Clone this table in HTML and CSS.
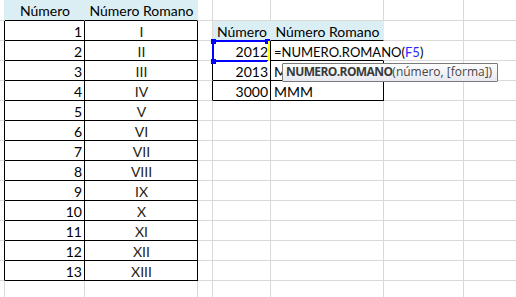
FILE: index.html
```html
<!DOCTYPE html>
<html lang="es">
<head>
<meta charset="utf-8">
<title>NUMERO.ROMANO</title>
<link rel="stylesheet" href="styles.css">
</head>
<body>
<div class="sheet">
  <!-- row 1 -->
  <div class="c a hdl"></div><div class="c hd">Número</div><div class="c hd">Número Romano</div><div class="c"></div><div class="c"></div><div class="c"></div><div class="c"></div><div class="c"></div>
  <!-- row 2 -->
  <div class="c a lb"></div><div class="c bx num">1</div><div class="c bx rom">I</div><div class="c"></div><div class="c hd">Número</div><div class="c hd">Número Romano</div><div class="c"></div><div class="c"></div>
  <!-- row 3 -->
  <div class="c a lb"></div><div class="c bx num">2</div><div class="c bx rom">II</div><div class="c lb"></div><div class="c bx num">2012</div><div class="c bx edit"><span class="editor">=NUMERO.ROMANO(<span class="ref">F5</span>)</span></div><div class="c"></div><div class="c"></div>
  <!-- row 4 -->
  <div class="c a lb"></div><div class="c bx num">3</div><div class="c bx rom">III</div><div class="c lb"></div><div class="c bx num">2013</div><div class="c bx">MMXIII</div><div class="c"></div><div class="c"></div>
  <!-- row 5 -->
  <div class="c a lb"></div><div class="c bx num">4</div><div class="c bx rom">IV</div><div class="c lb"></div><div class="c bx num">3000</div><div class="c bx">MMM</div><div class="c"></div><div class="c"></div>
  <!-- row 6 -->
  <div class="c a lb"></div><div class="c bx num">5</div><div class="c bx rom">V</div><div class="c"></div><div class="c"></div><div class="c"></div><div class="c"></div><div class="c"></div>
  <!-- row 7 -->
  <div class="c a lb"></div><div class="c bx num">6</div><div class="c bx rom">VI</div><div class="c"></div><div class="c"></div><div class="c"></div><div class="c"></div><div class="c"></div>
  <!-- row 8 -->
  <div class="c a lb"></div><div class="c bx num">7</div><div class="c bx rom">VII</div><div class="c"></div><div class="c"></div><div class="c"></div><div class="c"></div><div class="c"></div>
  <!-- row 9 -->
  <div class="c a lb"></div><div class="c bx num">8</div><div class="c bx rom">VIII</div><div class="c"></div><div class="c"></div><div class="c"></div><div class="c"></div><div class="c"></div>
  <!-- row 10 -->
  <div class="c a lb"></div><div class="c bx num">9</div><div class="c bx rom">IX</div><div class="c"></div><div class="c"></div><div class="c"></div><div class="c"></div><div class="c"></div>
  <!-- row 11 -->
  <div class="c a lb"></div><div class="c bx num">10</div><div class="c bx rom">X</div><div class="c"></div><div class="c"></div><div class="c"></div><div class="c"></div><div class="c"></div>
  <!-- row 12 -->
  <div class="c a lb"></div><div class="c bx num">11</div><div class="c bx rom">XI</div><div class="c"></div><div class="c"></div><div class="c"></div><div class="c"></div><div class="c"></div>
  <!-- row 13 -->
  <div class="c a lb"></div><div class="c bx num">12</div><div class="c bx rom">XII</div><div class="c"></div><div class="c"></div><div class="c"></div><div class="c"></div><div class="c"></div>
  <!-- row 14 -->
  <div class="c a lb"></div><div class="c bx num">13</div><div class="c bx rom">XIII</div><div class="c"></div><div class="c"></div><div class="c"></div><div class="c"></div><div class="c"></div>
  <!-- row 15 -->
  <div class="c a"></div><div class="c"></div><div class="c"></div><div class="c"></div><div class="c"></div><div class="c"></div><div class="c"></div><div class="c"></div>
</div>

<div class="selection">
  <span class="handle tl"></span><span class="handle tr"></span><span class="handle bl"></span>
</div>
<div class="cursor"></div>
<div class="tooltip"><b>NUMERO.ROMANO</b>(número, [forma])</div>
</body>
</html>
```

FILE: styles.css
```css
html, body {
  margin: 0;
  padding: 0;
  background: #ffffff;
  overflow: hidden;
}

body {
  position: relative;
  width: 516px;
  height: 297px;
}

.sheet {
  display: grid;
  grid-template-columns: 5px 80px 113px 15px 58px 113px 80px 80px;
  grid-template-rows: 21px;
  grid-auto-rows: 20px;
  font-family: "Lato", "Liberation Sans", sans-serif;
  font-size: 14px;
  color: #000000;
}

.c {
  box-sizing: border-box;
  border-right: 1px solid #d9d9d9;
  border-bottom: 1px solid #d9d9d9;
  padding: 1px 2px 0 3px;
  line-height: 19px;
  white-space: nowrap;
  overflow: visible;
  min-width: 0;
}

.a {
  padding: 0;
}

.hd {
  background: #daeef3;
  border-right-color: #daeef3;
  border-bottom-color: #000000;
  text-align: center;
}

.hdl {
  border-right-color: #daeef3;
}

.lb {
  border-right-color: #000000;
}

.bx {
  border-right-color: #000000;
  border-bottom-color: #000000;
}

.num {
  text-align: right;
}

.rom {
  text-align: center;
  color: #2a1c12;
}

.edit {
  border-right-color: #ffffff;
  position: relative;
  z-index: 1;
}

.editor {
  background: #ffffff;
  padding-right: 4px;
  font-size: 13px;
}

.ref {
  color: #2a2aff;
}

.selection {
  position: absolute;
  left: 212px;
  top: 40px;
  width: 53px;
  height: 18px;
  border: 2px solid #0000ff;
  border-right: none;
  z-index: 2;
}

.handle {
  position: absolute;
  width: 5px;
  height: 5px;
  background: #0000ff;
}

.handle.tl { left: -3px; top: -3px; }
.handle.bl { left: -3px; bottom: -4px; }
.handle.tr { right: -3px; top: -3px; }

.cursor {
  position: absolute;
  left: 268px;
  top: 41px;
  width: 2px;
  height: 20px;
  background: #ffff00;
  z-index: 3;
}

.tooltip {
  position: absolute;
  left: 282px;
  top: 63px;
  width: 211px;
  height: 17px;
  box-sizing: content-box;
  border: 1px solid #7a7a7a;
  border-radius: 1px;
  background: linear-gradient(#fdfdfd, #e8e9f0);
  font-family: "Open Sans", "Noto Sans", sans-serif;
  font-size: 12px;
  line-height: 15px;
  color: #474747;
  padding: 0 0 0 3px;
  white-space: nowrap;
  overflow: hidden;
  z-index: 4;
}

.tooltip b {
  font-weight: 700;
  letter-spacing: -0.6px;
  color: #3a3a3a;
}
```
